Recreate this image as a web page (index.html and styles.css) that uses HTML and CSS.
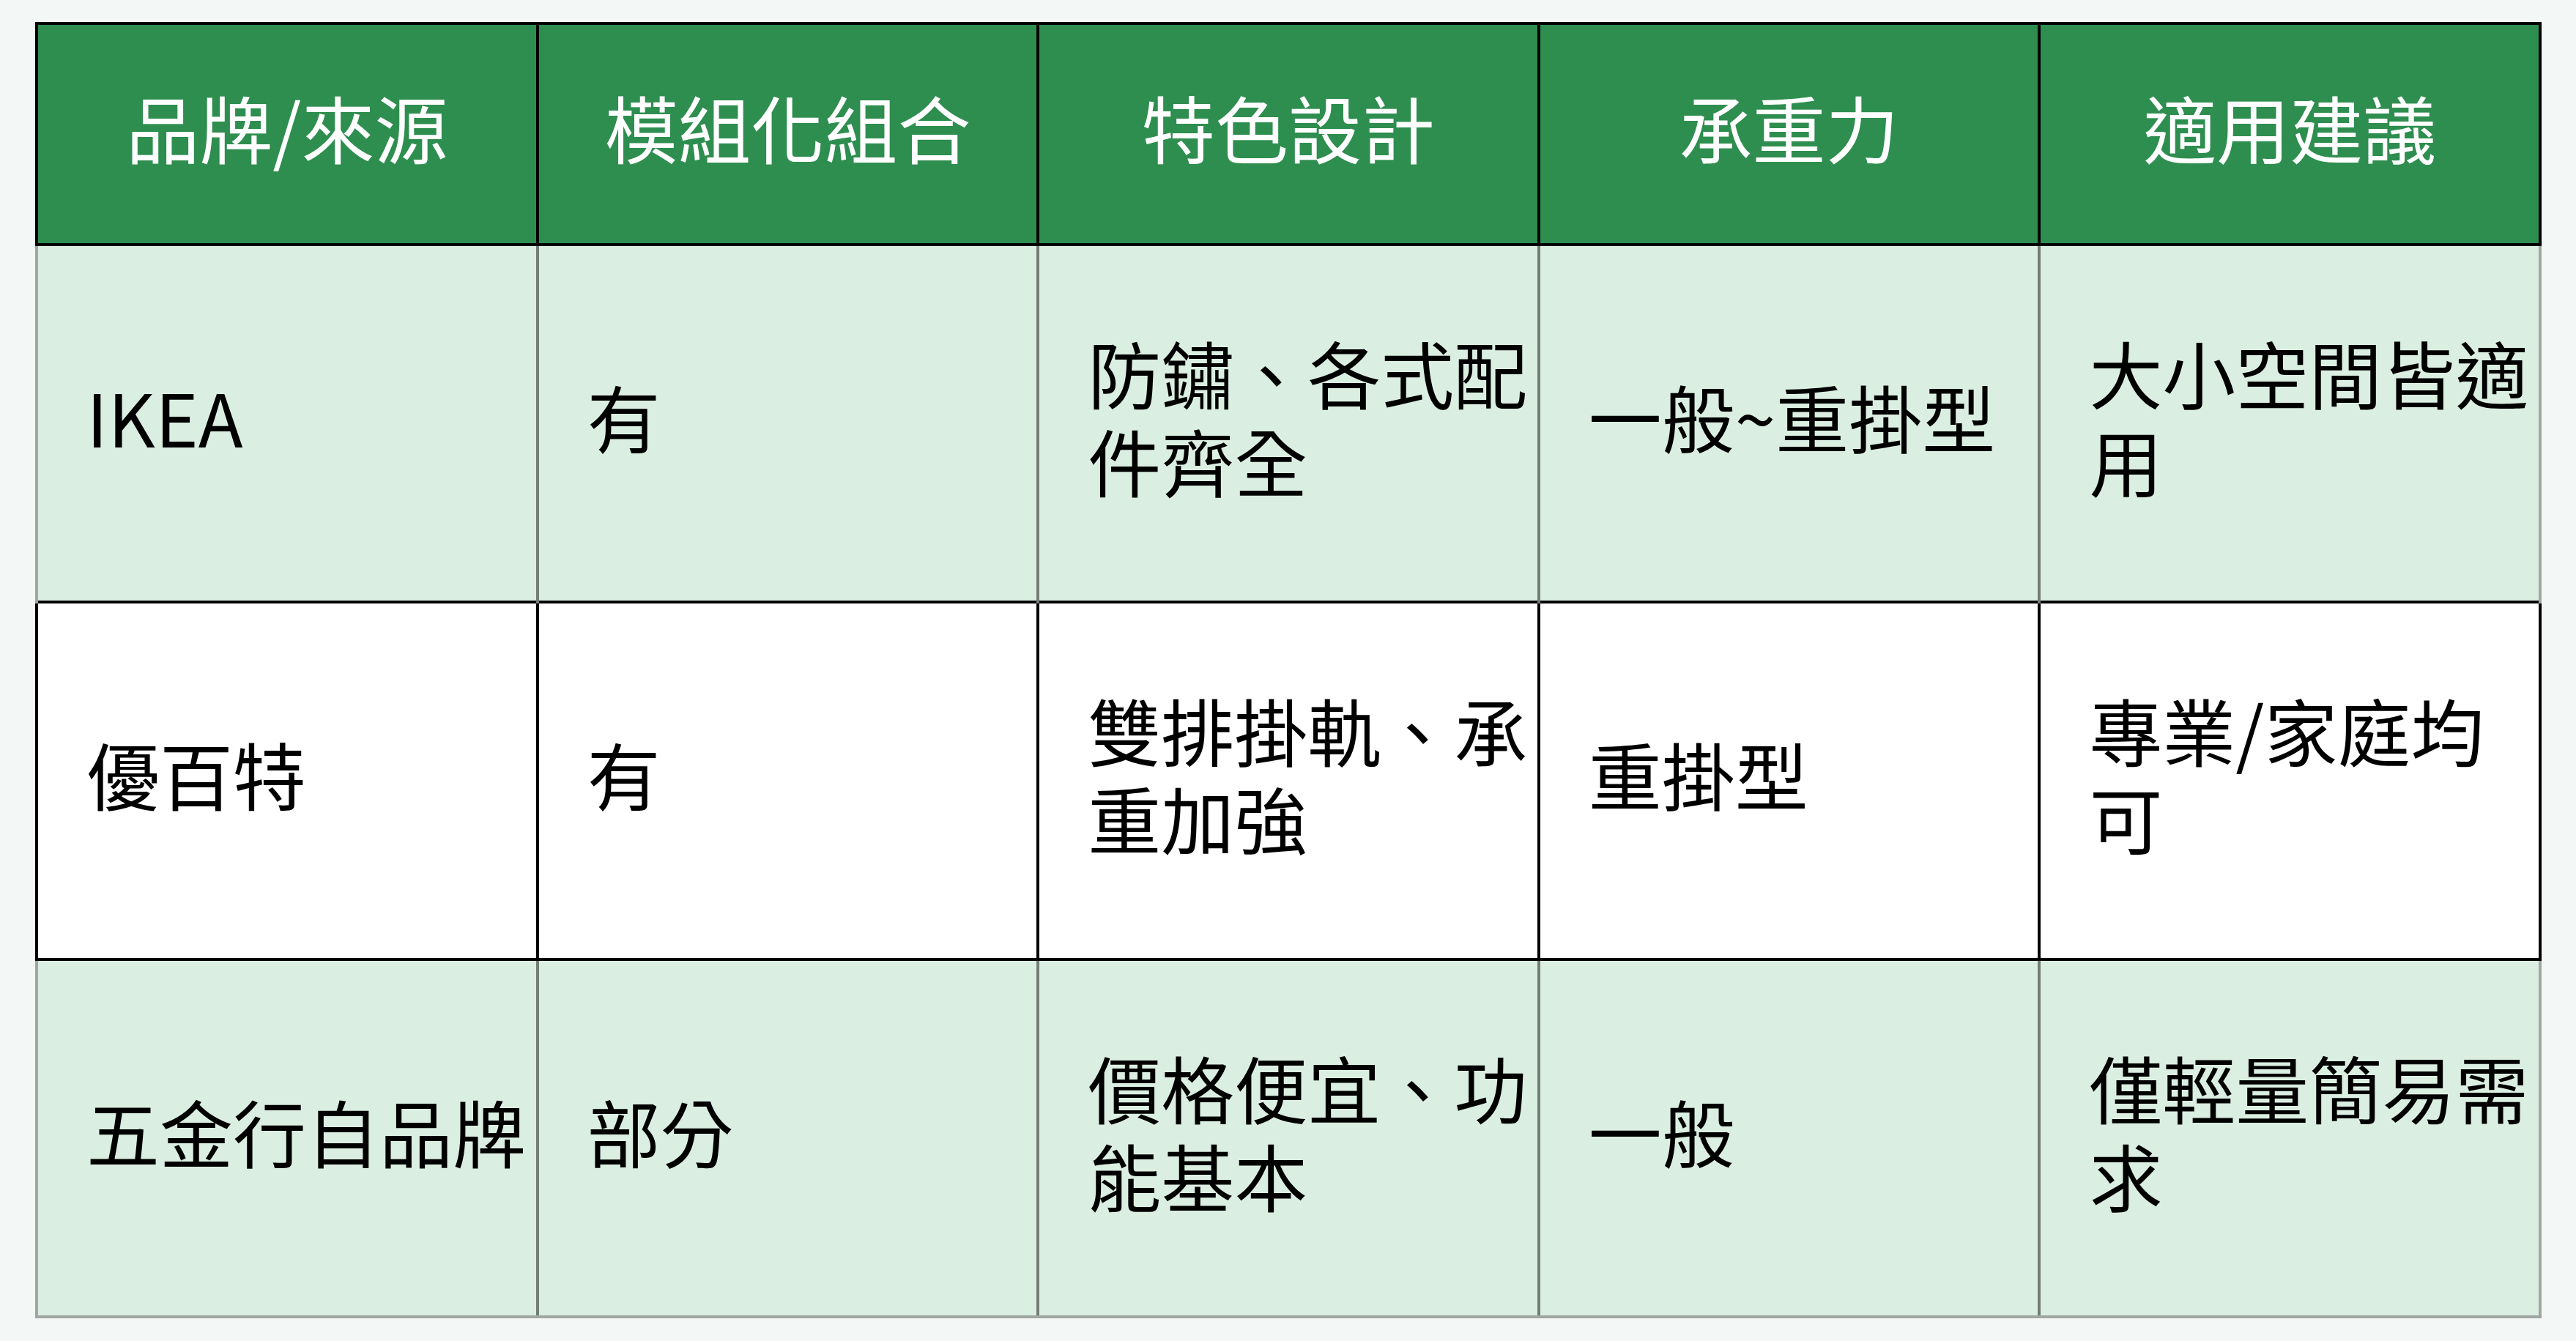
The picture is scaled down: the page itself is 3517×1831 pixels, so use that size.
FILE: index.html
```html
<!DOCTYPE html>
<html lang="zh-Hant">
<head>
<meta charset="utf-8">
<title>品牌比較表</title>
<link rel="stylesheet" href="styles.css">
</head>
<body>
<table class="compare">
  <colgroup>
    <col class="c"><col class="c"><col class="c"><col class="c"><col class="c">
  </colgroup>
  <thead>
    <tr class="head">
      <th>品牌/來源</th>
      <th>模組化組合</th>
      <th>特色設計</th>
      <th>承重力</th>
      <th>適用建議</th>
    </tr>
  </thead>
  <tbody>
    <tr class="alt">
      <td>IKEA</td>
      <td>有</td>
      <td>防鏽、各式配件齊全</td>
      <td>一般~重掛型</td>
      <td>大小空間皆適用</td>
    </tr>
    <tr class="plain">
      <td>優百特</td>
      <td>有</td>
      <td>雙排掛軌、承重加強</td>
      <td>重掛型</td>
      <td>專業/家庭均可</td>
    </tr>
    <tr class="alt last">
      <td>五金行自品牌</td>
      <td>部分</td>
      <td>價格便宜、功能基本</td>
      <td>一般</td>
      <td>僅輕量簡易需求</td>
    </tr>
  </tbody>
</table>
</body>
</html>
```

FILE: styles.css
```css
html, body {
  margin: 0;
  padding: 0;
}

body {
  background: #f3f7f6;
  font-family: "Noto Sans CJK TC", "Noto Sans", sans-serif;
  color: #000;
}

.compare {
  border-collapse: collapse;
  table-layout: fixed;
  width: 3422px;
  margin: 30px 0 0 48px;
  font-size: 100px;
  line-height: 120px;
}

.compare .c {
  width: 20%;
}

.compare th {
  background: #2e8e4f;
  color: #fff;
  font-weight: 400;
  text-align: center;
  vertical-align: middle;
  height: 302px;
  padding: 0 0 20px 0;
  box-sizing: border-box;
  border: 4px solid #000;
}

.compare td {
  text-align: left;
  vertical-align: middle;
  height: 488px;
  padding: 0 8px 20px 66px;
  box-sizing: border-box;
}

.compare .alt td {
  background: #dbeee2;
  border-left: 4px solid #737d77;
  border-right: 4px solid #737d77;
  border-top: none;
  border-bottom: none;
}

.compare .alt td:first-child {
  border-left-color: #a0a7a3;
}

.compare .alt td:last-child {
  border-right-color: #a0a7a3;
}

.compare .alt.last td {
  border-bottom: 4px solid #a0a7a3;
}

.compare .plain td {
  background: #fff;
  border: 4px solid #000;
}
```
